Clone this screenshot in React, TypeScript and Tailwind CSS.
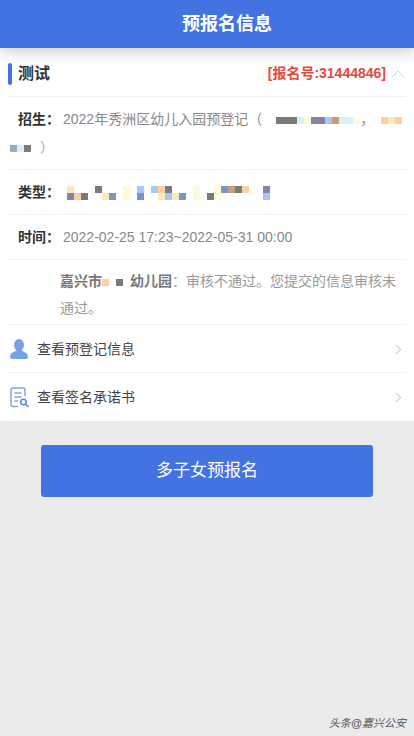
import React from 'react';
import { ChevronRight, ChevronUp } from 'lucide-react';

const palette: Record<string, string> = {
  y: 'bg-[#fde9b8]',
  p: 'bg-[#fffbd6]',
  o: 'bg-[#fcd0a5]',
  g: 'bg-[#7a7a7a]',
  b: 'bg-[#7496c8]',
  l: 'bg-[#a5c8f5]',
  v: 'bg-[#8680b0]',
  t: 'bg-[#c89a80]',
  c: 'bg-[#d8f0f8]',
  s: 'bg-[#8fb0c8]',
  '.': 'bg-transparent',
};

// each letter is one 7px block of the blurred-out text
const Mosaic: React.FC<{ rows: string[] }> = ({ rows }) => (
  <span className="inline-flex flex-col align-middle">
    {rows.map((row, i) => (
      <span key={i} className="flex">
        {row.split('').map((cell, j) => (
          <span key={j} className={`block h-[7px] w-[7px] ${palette[cell]}`}></span>
        ))}
      </span>
    ))}
  </span>
);

const Row: React.FC<{ label: string; children: React.ReactNode }> = ({ label, children }) => (
  <div className="flex h-[45px] items-center border-b border-[#f3f3f3] pl-[10px] text-[14px]">
    <span className="font-bold text-[#333]">{label}：</span>
    {children}
  </div>
);

const UserIcon = () => (
  <svg width="18" height="20" viewBox="0 0 18 20" fill="#76a2e4">
    <ellipse cx="9" cy="6" rx="5" ry="6" />
    <path d="M6.500 11 C5 13 1 13 .5 16 L0 18 Q0 20 2 20 H16 Q18 20 18 18 L17.500 16 C17 13 13 13 11.500 11 Z" />
  </svg>
);

const DocIcon = () => (
  <svg width="20" height="21" viewBox="0 0 20 21" fill="none" stroke="#8aa2e2" strokeWidth="1.500">
    <path d="M8 19.500 H3 Q1 19.500 1 17.500 V3 Q1 1 3 1 H13 Q15 1 15 3 V9" />
    <path d="M4.500 6 H11.500 M4.500 10 H11.500 M4.500 14 H8" />
    <circle cx="13.500" cy="15" r="2.800" stroke="#5f86dc" />
    <path d="M15.500 17 L18.500 20" stroke="#5f86dc" />
  </svg>
);

const LinkRow: React.FC<{ icon: React.ReactNode; text: string; last?: boolean }> = ({ icon, text, last }) => (
  <div className={`flex h-12 items-center pt-[1px] ${last ? '' : 'border-b border-[#f3f3f3]'}`}>
    <span className="flex w-[29px] justify-start pl-[2px]">{icon}</span>
    <span className="flex-1 text-[14px] text-[#444]">{text}</span>
    <ChevronRight size={17} strokeWidth={1.500} className="-mr-[1px] text-[#d4d4d4]" />
  </div>
);

export default function App() {
  return (
    <div className="relative min-h-[736px] bg-[#ebebeb] font-['Liberation_Sans','Noto_Sans_CJK_SC',sans-serif]">
      <header className="relative flex h-12 items-center justify-center bg-[#4273e0] pl-10 text-[18px] font-bold text-white shadow-[0_4px_14px_rgba(0,0,0,0.2)]">
        预报名信息
      </header>

      <section className="bg-white px-2">
        <div className="flex h-[49px] items-center border-b border-[#f1f1f1] pt-[3px]">
          <span className="h-[22px] w-1 rounded-sm bg-[#4273e0]"></span>
          <span className="ml-[6px] flex-1 text-[16px] font-semibold text-[#333]">测试</span>
          <span className="text-[14px] font-bold text-[#e8483c]">[报名号:31444846]</span>
          <ChevronUp size={24} strokeWidth={1} className="-mr-1 text-[#d4d4d4]" />
        </div>

        <p className="border-b border-[#f3f3f3] pb-2 pt-2 text-[14px] leading-[28px] text-[#888]">
          <span className="ml-[10px] font-bold text-[#333]">招生：</span>
          <span className="ml-[3px]">2022年秀洲区幼儿入园预登记（</span>
          <Mosaic rows={['..gggcpvvltccp']} />
          ，<Mosaic rows={['.oyo']} />
          <br />
          <span className="ml-[2px]">
            <Mosaic rows={['scg']} />
          </span>
          <span className="ml-[9px] text-[#aaa]">）</span>
        </p>

        <Row label="类型">
          <span className="ml-[7px]">
            <Mosaic
              rows={[
                'y...g...p.l.log...p..pbtgo..v',
                'vog..yb.p.b..ylyb.p.gp......l',
              ]}
            />
          </span>
        </Row>

        <Row label="时间">
          <span className="ml-[3px] text-[#888]">2022-02-25 17:23~2022-05-31 00:00</span>
        </Row>

        <div className="border-b border-[#f3f3f3] pb-[2px] pl-[52px] pt-2 text-[14px] leading-[27px] text-[#999]">
          <div className="whitespace-nowrap">
            <span className="font-bold text-[#777]">嘉兴市</span>
            <Mosaic rows={['o']} />
            <span className="ml-[7px]">
              <Mosaic rows={['g']} />
            </span>
            <span className="ml-[7px] font-bold text-[#777]">幼儿园</span>
            <span>：审核不通过。您提交的信息审核未</span>
          </div>
          <div>通过。</div>
        </div>

        <LinkRow icon={<UserIcon />} text="查看预登记信息" />
        <LinkRow icon={<DocIcon />} text="查看签名承诺书" last />
      </section>

      <div className="flex justify-center pt-6">
        <button className="h-[52px] w-[332px] rounded-[3px] bg-[#4273e0] text-[17px] text-white">多子女预报名</button>
      </div>

      <span className="absolute bottom-[5px] right-[8px] text-[11px] italic text-[#555]">头条@嘉兴公安</span>
    </div>
  );
}
